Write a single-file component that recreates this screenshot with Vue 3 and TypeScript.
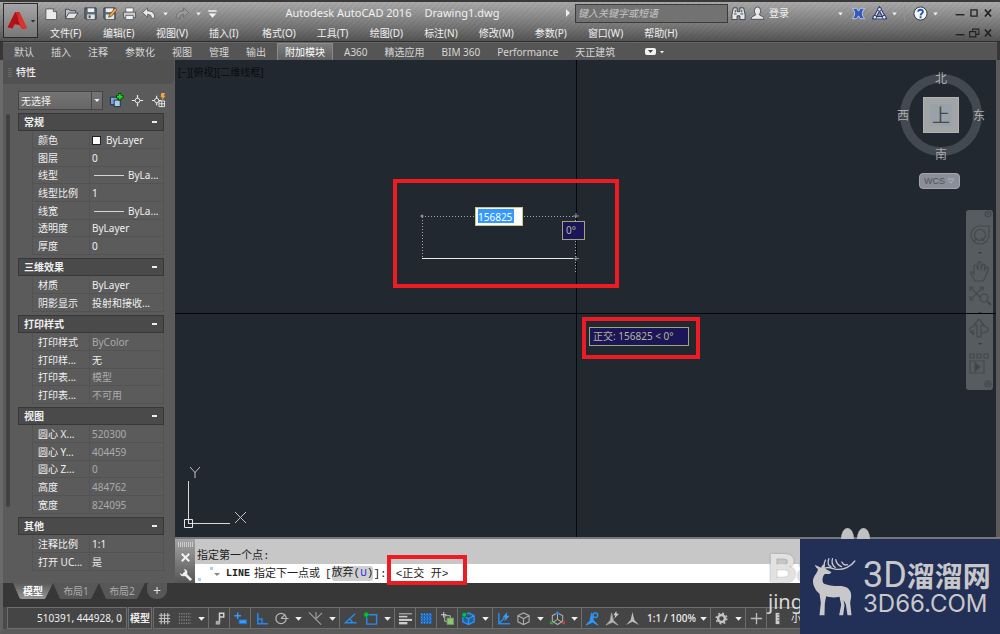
<script setup lang="ts">
import { ref } from 'vue'

interface Row { label: string; value: string; kind?: 'swatch' | 'line'; muted?: boolean }
interface Group { title: string; rows: Row[] }

const icons: Record<string, string> = {
  new: '<path d="M2 3h8l3.500 3v8.500h-11.500z" fill="#ececec" stroke="#555"/><path d="M10 3v3h3.500" fill="#bbb" stroke="#555"/>',
  open: '<path d="M1.500 13.500v-10h4l1 1.500h6v2" fill="#b9c2cc" stroke="#444"/><path d="M1.500 13.500l3.500-6h10l-4 6z" fill="#dfe5ea" stroke="#444"/>',
  save: '<path d="M2 2h12v12h-11l-1-1z" fill="#5c6a78" stroke="#333d48"/><path d="M5 2.500h7v4h-7z" fill="#eee"/><path d="M4.500 9h8v5h-8z" fill="#dfe3e6"/><path d="M6 10h2v3h-2z" fill="#444"/>',
  saveas: '<path d="M2 2h12v12h-11l-1-1z" fill="#5c6a78" stroke="#333d48"/><path d="M4 2.500h8v4h-8z" fill="#eee"/><path d="M4 9h9v5h-9z" fill="#dfe3e6"/><path d="M7 12l1-3 6-7 2 2-6 7z" fill="#f0a63c" stroke="#6b4a20" stroke-width=".8"/>',
  print: '<path d="M4 2h8v5h-8z" fill="#fff" stroke="#666"/><path d="M1.500 6.500h13v6h-13z" fill="#c9cdd2" stroke="#555"/><path d="M4 10h8v4.500h-8z" fill="#e9f1fa" stroke="#666"/>',
  undo: '<path d="M1.500 7l5.500-5v3.200c5 0 7.500 2.300 7.500 6.300v1.500h-3.500c.2-3-1-4-4-4v3z" fill="#e8e8e8" stroke="#555" stroke-width=".9"/>',
  redo: '<path d="M14.500 7l-5.500-5v3.200c-5 0-7.500 2.300-7.500 6.300v1.500h3.500c-.2-3 1-4 4-4v3z" fill="#999" stroke="#6b6b6b" stroke-width=".9"/>',
  customize: '<path d="M3.500 4.500h9v1.500h-9zM4 8h8l-4 4.500z" fill="#f3f3f3"/>',
  find: '<path d="M2.500 2h4v4h3v-4h4l1.500 7v5.500h-5.500v-4h-3v4h-5.500v-5.500z" fill="#e5e5e5" stroke="#39424c"/><path d="M3 8.500h3m4 0h3M4.500 4v3m7-3v3" stroke="#39424c"/>',
  user: '<path d="M4.700 5a3.300 4 0 0 1 6.600 0c0 2-.7 3-1.400 4.200.5 1.500 5 1.200 5 5h-13.800c0-3.800 4.500-3.500 5-5-.7-1.200-1.400-2.200-1.400-4.200z" fill="#e9e9e9" stroke="#39424c" stroke-width=".9"/>',
  exchange: '<path d="M1.500 2.500h4.500l2 3 2-3h4.500q-5 5.500 0 11h-4.500l-2-3-2 3h-4.500q5-5.500 0-11z" fill="#3458b4" stroke="#c4d2ff" stroke-width=".9"/>',
  a360: '<path d="M8 3l5.500 9.500h-11z" fill="none" stroke="#23356b" stroke-width="3.500"/><path d="M8 3l5.500 9.500h-11z" fill="none" stroke="#d9e0f4" stroke-width="1.500"/><circle cx="8" cy="3.500" r="2" fill="#d9e0f4" stroke="#23356b"/><circle cx="3" cy="12" r="2" fill="#d9e0f4" stroke="#23356b"/><circle cx="13" cy="12" r="2" fill="#d9e0f4" stroke="#23356b"/>',
  help: '<circle cx="8" cy="8" r="7" fill="#f4f4f4" stroke="#27303c"/><path d="M5.500 6.200c.2-3 5-2.700 5 0 0 1.700-2.400 1.800-2.400 3.800m0 1v2" fill="none" stroke="#1f58b8" stroke-width="2"/>',
  min: '<path d="M3 10h10" stroke="#222" stroke-width="1.600"/>',
  max: '<path d="M4.500 4.500h7v7h-7z" fill="none" stroke="#222" stroke-width="1.500"/>',
  restore: '<path d="M6.500 6V3.500h7v6h-3M3 6.500h7v6h-7z" fill="none" stroke="#222" stroke-width="1.300"/>',
  close: '<path d="M4.500 4l7 8m0-8l-7 8" stroke="#222" stroke-width="2"/>',
  pick: '<path d="M1.500 4.500h8v8h-8z" fill="#7aa6dc" stroke="#1d2a3a"/><path d="M5.500 7.500h6.500v7h-6.500z" fill="#a9cbf0" stroke="#1d2a3a"/><path d="M11.500 0v8m-4-4h8" stroke="#063c06" stroke-width="3.200"/><path d="M11.500 1v6m-3-3h6" stroke="#18e018" stroke-width="2"/>',
  target: '<path d="M8 2v12M2 8h12" stroke="#e8e8e8" stroke-width="1.300"/><circle cx="8" cy="8" r="2.500" fill="#5b5b5b" stroke="#e8e8e8"/>',
  quick: '<path d="M6 3v10M1 8h10" stroke="#e8e8e8" stroke-width="1.300"/><circle cx="6" cy="8" r="2.300" fill="#5b5b5b" stroke="#e8e8e8"/><path d="M11 0h4l-1.500 3h2l-4 5 .8-3.600h-2z" fill="#f7a93a"/><path d="M8.500 8.500h6v6h-6zM8.500 11.500h6m-3-3v6" fill="#555" stroke="#eee"/>',
  grid: '<path d="M4.500 2v12M8 2v12m3.500-12v12M2 4.500h12M2 8h12M2 11.500h12" stroke="#c4c4c4" stroke-width="1.200"/>',
  snap: '<path d="M2 3h13M2 6.300h13M2 9.600h13M2 13h13" stroke="#aaa" stroke-dasharray="1.200 1.300"/>',
  infer: '<path d="M8 13V2.500h4.500v4H8" fill="none" stroke="#d2d2d2" stroke-width="1.600"/><path d="M4 10.500h4.500v4h-4.500z" fill="#aaa"/>',
  dyn: '<path d="M5 1.500v7M1.500 5h7" stroke="#369cff" stroke-width="1.500"/><path d="M6.500 9.500h8v4h-8z" fill="#389cff" stroke="#1d75d0"/>',
  ortho: '<path d="M4 2v11.500h11M4 8.500h4.500v5" fill="none" stroke="#2387ed" stroke-width="1.600"/>',
  polar: '<circle cx="7.500" cy="8" r="5.500" fill="none" stroke="#b6b6b6" stroke-width="1.300"/><path d="M7.500 8L12 3.500M7.500 8h8" stroke="#b6b6b6" stroke-width="1.200"/>',
  iso: '<path d="M1 1.500l13 13M8.500 1v7M15 2l-6 6" stroke="#a0a0a0" stroke-width="1.200"/>',
  track: '<path d="M13 3L2.500 12.500h12M7 8l3 4" fill="none" stroke="#278bea" stroke-width="1.500"/>',
  osnap: '<path d="M4 4h10.500v10h-10.500z" fill="none" stroke="#278bea" stroke-width="1.500"/><circle cx="3.500" cy="4" r="2.600" fill="#12be3a" stroke="#083"/>',
  weight: '<path d="M1 3h14" stroke="#ccc"/><path d="M1 6h9" stroke="#ccc" stroke-width="1.700"/><path d="M1 9.500h14" stroke="#ccc" stroke-width="2.200"/><path d="M1 13h9" stroke="#ccc" stroke-width="2.500"/>',
  trans: '<path d="M2 2h12v12h-12z" fill="#1d5597"/><path d="M2 3.500h12M2 6.500h12M2 9.500h12M2 12.500h12" stroke="#48a4ff" stroke-width="1.500" stroke-dasharray="1.500 1.500"/><path d="M3 5h11M3 8h11M3 11h11" stroke="#318de7" stroke-dasharray="1.500 1.500"/>',
  cycle: '<path d="M4 1v6M1 4h6" stroke="#ddd"/><path d="M5 5h6v6h-6z" fill="none" stroke="#bbb"/><path d="M7.500 7.500h7v7h-7z" fill="#91c377" stroke="#6c9858"/>',
  snap3d: '<path d="M8 2l6 3v6.500l-6 3-6-3v-6.500zM2 5l6 3 6-3M8 8v6.500" fill="#235f9a" stroke="#2d96fa" stroke-width="1.400"/><circle cx="3.500" cy="4" r="2.600" fill="#12be3a" stroke="#064"/>',
  ducs: '<path d="M3 2v11.500h12M3.500 13L9 7.500" fill="none" stroke="#278bea" stroke-width="1.600"/><path d="M12 1l-5 6h3l-1 4 5.500-6h-3z" fill="#39a0ff"/>',
  cube: '<path d="M8 2l6 3v6.500l-6 3-6-3v-6.500zM2 5l6 3 6-3M8 8v6.500" fill="none" stroke="#aaa" stroke-width="1.200"/>',
  gizmo: '<path d="M8 2l5.500 3v6l-5.500 3.500-5.500-3.500v-6z" fill="none" stroke="#aaa" stroke-width="1.200"/><path d="M8 3v6l-5 3m5-3l5 3" fill="none" stroke="#bbb"/><path d="M5.500 3.500l2.500-3.500 2.500 3.500z" fill="#3287ec"/><path d="M0 10.500l4 3.500h-4z" fill="#2aaf36"/><path d="M12 14l4-3.500v3.500z" fill="#e13b2a"/>',
  ann1: '<path d="M7 2l2 8 5 5-6-3-7 3 4.500-5z" fill="#2d97fb" stroke="#2d97fb"/><circle cx="11" cy="4.500" r="2.500" fill="#444" stroke="#2d97fb" stroke-width="1.500"/>',
  ann2: '<path d="M7 2l2 8 5 5-6-3-7 3 4.500-5z" fill="#bbb" stroke="#999"/><path d="M12 0l-3 4.500h2l-1 3.500 5-5h-2.500z" fill="#ccc"/>',
  ann3: '<path d="M8 1l2 8.500 5 5.500-7-3.500-7 3.500 5-5.500z" fill="#bbb"/>',
  gear: '<circle cx="8" cy="8" r="3.700" fill="none" stroke="#c5c5c5" stroke-width="2.600"/><circle cx="8" cy="8" r="5.700" fill="none" stroke="#c5c5c5" stroke-width="1.500" stroke-dasharray="2 2.500"/>',
  plus: '<path d="M8 2v12M2 8h12" stroke="#bdbdbd" stroke-width="1.400"/>',
  ruler: '<path d="M6 2h4v12h-4z" fill="#ccc"/><path d="M8 4h2M8 7h2M8 10h2" stroke="#666"/>',
  arrow: '<path d="M4.500 6.500h7l-3.500 4z" fill="#f0f0f0"/>',
  tiny: '<path d="M5.500 7h5l-2.500 3z" fill="#f0f0f0"/>'
}

const fileTools = ['new', 'open', 'save', 'saveas', 'print', 'undo']
const menus = ['文件(F)', '编辑(E)', '视图(V)', '插入(I)', '格式(O)', '工具(T)', '绘图(D)', '标注(N)', '修改(M)', '参数(P)', '窗口(W)', '帮助(H)']
const ribbonTabs = ['默认', '插入', '注释', '参数化', '视图', '管理', '输出', '附加模块', 'A360', '精选应用', 'BIM 360', 'Performance', '天正建筑']
const activeTab = ref('附加模块')
const sheets = ['模型', '布局1', '布局2']
const activeSheet = ref('模型')
const length = ref('156825')

const groups: Group[] = [
  { title: '常规', rows: [
    { label: '颜色', value: 'ByLayer', kind: 'swatch' },
    { label: '图层', value: '0' },
    { label: '线型', value: 'ByLa...', kind: 'line' },
    { label: '线型比例', value: '1' },
    { label: '线宽', value: 'ByLa...', kind: 'line' },
    { label: '透明度', value: 'ByLayer' },
    { label: '厚度', value: '0' }
  ] },
  { title: '三维效果', rows: [
    { label: '材质', value: 'ByLayer' },
    { label: '阴影显示', value: '投射和接收...' }
  ] },
  { title: '打印样式', rows: [
    { label: '打印样式', value: 'ByColor', muted: true },
    { label: '打印样...', value: '无' },
    { label: '打印表...', value: '模型', muted: true },
    { label: '打印表...', value: '不可用', muted: true }
  ] },
  { title: '视图', rows: [
    { label: '圆心 X...', value: '520300', muted: true },
    { label: '圆心 Y...', value: '404459', muted: true },
    { label: '圆心 Z...', value: '0', muted: true },
    { label: '高度', value: '484762', muted: true },
    { label: '宽度', value: '824095', muted: true }
  ] },
  { title: '其他', rows: [
    { label: '注释比例', value: '1:1' },
    { label: '打开 UC...', value: '是' }
  ] }
]

const statusGroups: string[][] = [
  ['grid', 'snap', 'arrow'],
  ['infer'],
  ['dyn'],
  ['ortho', 'polar', 'arrow', 'iso', 'arrow'],
  ['track', 'osnap', 'arrow'],
  ['weight'],
  ['trans'],
  ['cycle'],
  ['snap3d', 'arrow'],
  ['ducs', 'cube', 'arrow', 'gizmo', 'arrow']
]
</script>

<template>
  <div class="app">
    <header class="header">
      <button class="app-button" aria-label="A">
        <svg class="logo" viewBox="0 0 32 32">
          <path d="M12 3h6l11 23-7 2-4-6-6-1-4 6-7-2z" fill="#d42a27" />
          <path d="M12 3l5 10-8 9-1 5-7-2z" fill="#b01218" />
          <path d="M15 12l7 10-11-2z" fill="#a01318" />
          <path d="M18 3l11 23-7 2-6-13z" fill="#d9332c" />
        </svg>
        <svg class="icon caret" viewBox="0 0 16 16"><path d="M2 5h12l-6 7z" fill="#26303c" /></svg>
      </button>
      <div class="bars">
        <div class="title-bar">
          <div class="quick">
            <button v-for="name in fileTools" :key="name" class="tool" :aria-label="name"><svg class="icon" viewBox="0 0 16 16" v-html="icons[name]" /></button>
            <button class="drop" aria-label="undo list"><svg class="icon" viewBox="0 0 16 16" v-html="icons.tiny" /></button>
            <button class="tool" aria-label="redo"><svg class="icon" viewBox="0 0 16 16" v-html="icons.redo" /></button>
            <button class="drop" aria-label="redo list"><svg class="icon" viewBox="0 0 16 16" v-html="icons.tiny" /></button>
            <button class="drop" aria-label="customize"><svg class="icon" viewBox="0 0 16 16" v-html="icons.customize" /></button>
          </div>
          <h1 class="title"><span>Autodesk AutoCAD 2016</span><span>Drawing1.dwg</span></h1>
          <svg class="play" viewBox="0 0 6 8"><path d="M1 0l4 4-4 4z" fill="#eee" /></svg>
          <input class="search" type="search" placeholder="键入关键字或短语" aria-label="键入关键字或短语" />
          <div class="account">
            <button class="tool" aria-label="find"><svg class="icon" viewBox="0 0 16 16" v-html="icons.find" /></button>
            <button class="login"><svg class="icon" viewBox="0 0 16 16" v-html="icons.user" />登录</button>
            <button class="drop push" aria-label="account"><svg class="icon" viewBox="0 0 16 16" v-html="icons.tiny" /></button>
            <button class="tool wide" aria-label="exchange"><svg class="icon" viewBox="0 0 16 16" v-html="icons.exchange" /></button>
            <button class="tool" aria-label="a360"><svg class="icon" viewBox="0 0 16 16" v-html="icons.a360" /></button>
            <button class="drop narrow" aria-label="a360 menu"><svg class="icon" viewBox="0 0 16 16" v-html="icons.tiny" /></button>
            <span class="divider" />
            <button class="tool" aria-label="help"><svg class="icon" viewBox="0 0 16 16" v-html="icons.help" /></button>
            <button class="drop narrow" aria-label="help menu"><svg class="icon" viewBox="0 0 16 16" v-html="icons.tiny" /></button>
          </div>
          <div class="window-buttons">
            <button v-for="name in ['min', 'max', 'close']" :key="name" :aria-label="name"><svg class="icon small" viewBox="0 0 16 16" v-html="icons[name]" /></button>
          </div>
        </div>
        <div class="menu-bar">
          <nav class="menus">
            <button v-for="menu in menus" :key="menu">{{ menu }}</button>
          </nav>
          <div class="window-buttons">
            <button v-for="name in ['min', 'restore', 'close']" :key="name" :aria-label="name"><svg class="icon small" viewBox="0 0 16 16" v-html="icons[name]" /></button>
          </div>
        </div>
      </div>
    </header>

    <nav class="ribbon">
      <button v-for="tab in ribbonTabs" :key="tab" :class="{ active: tab === activeTab }" @click="activeTab = tab">{{ tab }}</button>
      <button class="ribbon-toggle" aria-label="ribbon">
        <svg viewBox="0 0 22 10"><rect x="1" y="1" width="11" height="7" rx="2" fill="#f2f2f2" /><path d="M4 3h5l-2.500 3z" fill="#444" /><path d="M16 4h4l-2 2.500z" fill="#eee" /></svg>
      </button>
    </nav>

    <div class="work">
      <aside class="palette">
        <h2 class="palette-title"><span class="grip" />特性</h2>
        <div class="palette-body">
          <div class="scroll"><span /></div>
          <div class="props">
            <div class="chooser">
              <div class="combo">
                <select aria-label="无选择"><option>无选择</option></select>
                <svg class="icon combo-arrow" viewBox="0 0 16 16" v-html="icons.arrow" />
              </div>
              <button v-for="name in ['pick', 'target', 'quick']" :key="name" :aria-label="name"><svg class="icon" viewBox="0 0 16 16" v-html="icons[name]" /></button>
            </div>
            <section v-for="group in groups" :key="group.title" class="group">
              <button class="group-head">{{ group.title }}<span class="minus" /></button>
              <table>
                <tbody>
                  <tr v-for="(row, i) in group.rows" :key="i">
                    <th scope="row">{{ row.label }}</th>
                    <td :class="{ muted: row.muted }"><span v-if="row.kind" :class="row.kind" />{{ row.value }}</td>
                  </tr>
                </tbody>
              </table>
            </section>
          </div>
        </div>
      </aside>

      <main class="main">
        <div class="canvas">
          <span class="view-label">[−][俯视][二维线框]</span>
          <div class="compass">
            <span class="n">北</span><span class="w">西</span><span class="e">东</span><span class="s">南</span>
            <button class="cube"><span>上</span></button>
          </div>
          <button class="wcs">WCS<svg viewBox="0 0 10 8"><path d="M1 1h8l-4 6z" fill="#8f929b" stroke="#b0b2b9" /></svg></button>
          <div class="nav-bar">
            <svg viewBox="0 0 27 180" fill="none" stroke="#43484d" stroke-width="1.200">
              <circle cx="22" cy="4" r="3" /><path d="M20.500 2.500l3 3m0-3l-3 3" />
              <path d="M14 16h9v10a9 9 0 1 1-9-10z" /><circle cx="14" cy="25" r="5.500" /><path d="M8 31l3-3m7 3l-3-3" />
              <path d="M9 71l-4-7c-1-3 1-3 3 0v-7c0-3 2-3 3 0l1 3v-6c0-3 3-3 3 0v6l1-4c1-3 3-2 3 0l-1 5 2-3c2-2 3 0 2 2l-3 8-2 3z" />
              <path d="M4 77l13 13M17 77L4 90M4 81v-4h4M13 77h4v4M4 86v4h4" /><circle cx="18" cy="88" r="4" fill="#575c61" /><path d="M21 91l4 4" stroke-width="2" />
              <path d="M11 127v-12h-3l5-6 5 6h-3v12z" /><path d="M9 116c-7 1-7 6 0 7m8-7c7 1 7 6-1 7M8 120l-3 2 3 3" />
              <path d="M4 144h4v4h-4zm7 0h4v4h-4zm7 0h4v4h-4zM4 151h14v12h-14z" /><path d="M9 153l5 4-5 4z" fill="#3e4348" />
              <circle cx="22" cy="174" r="3" /><circle cx="22" cy="174" r="1" />
              <path d="M12 42h4l-2 2zm0 60h4l-2 2zm0 31h4l-2 2z" fill="#343a40" stroke="none" />
            </svg>
          </div>
          <svg class="drawing">
            <path d="M0 253.500H821M401.500 0V477" stroke="#05080b" />
            <path d="M247 156.500H401M247.500 157V198M400.500 157V212" stroke="#a5a8aa" stroke-dasharray="1 2" fill="none" />
            <path d="M247 198.500H401" stroke="#e8e8e8" />
            <circle cx="247" cy="156" r="1.500" fill="#8d9194" />
            <path d="M398 156h6M398 198.500h6M401 196v5M401 153v5" stroke="#8d9194" />
            <path d="M13.500 464V421M13 463.500H55" stroke="#d5d7d9" />
            <path d="M9.500 459.500h8v8h-8z" stroke="#e6e6e6" fill="none" />
            <path d="M15 407l5 5.500 5-5.500M20 412v6M60 452l11 11M71 452L60 463" stroke="#bfc3c6" fill="none" />
          </svg>
          <input v-model="length" class="length" aria-label="length" />
          <span class="tip angle">0°</span>
          <span class="tip polar">正交: 156825 &lt; 0°</span>
          <span class="mark mark-draw" />
          <span class="mark mark-tip" />
        </div>

        <div class="command">
          <div class="command-side">
            <span class="dots" />
            <button aria-label="close"><svg class="icon" viewBox="0 0 16 16"><path d="M4 4l8 8m0-8l-8 8" stroke="#f4f4f4" stroke-width="2" /></svg></button>
            <button aria-label="settings"><svg class="icon" viewBox="0 0 16 16"><path d="M6 6l8 8" stroke="#f0f0f0" stroke-width="3" /><path d="M6.500 2a4 4 0 1 1-4.500 4.500l2.500 1.500 3-3z" fill="#f0f0f0" /></svg></button>
          </div>
          <div class="command-text">
            <p class="history">指定第一个点:</p>
            <div class="prompt">
              <svg class="prompt-icon" viewBox="0 0 28 16"><path d="M1 12h3v3h-3zM13 1h3v3h-3z" fill="#a9cdf8" /><path d="M17 7h6l-3 3z" fill="#888" /></svg>
              <b>LINE</b><span class="ask">指定下一点或</span><span>[</span><button class="option">放弃(<i>U</i>)</button><span>]:</span><span class="reply">&lt;正交 开&gt;</span>
            </div>
          </div>
          <span class="mark mark-command" />
        </div>
      </main>
    </div>

    <nav class="sheets">
      <button v-for="sheet in sheets" :key="sheet" :class="{ active: sheet === activeSheet }" @click="activeSheet = sheet">{{ sheet }}</button>
      <button class="add" aria-label="add">+</button>
    </nav>

    <footer class="status">
      <span class="coords">510391, 444928, 0</span>
      <button class="model">模型</button>
      <div v-for="(items, g) in statusGroups" :key="g" class="cell">
        <button v-for="(name, i) in items" :key="i" :class="name === 'arrow' ? 'more' : 'item'" :aria-label="name"><svg class="icon" viewBox="0 0 16 16" v-html="icons[name]" /></button>
      </div>
      <div class="cell">
        <button v-for="name in ['ann1', 'ann2', 'ann3']" :key="name" class="item" :aria-label="name"><svg class="icon" viewBox="0 0 16 16" v-html="icons[name]" /></button>
        <button class="scale">1:1 / 100%</button>
        <button class="more" aria-label="scale list"><svg class="icon" viewBox="0 0 16 16" v-html="icons.arrow" /></button>
      </div>
      <div class="cell">
        <button class="item" aria-label="workspace"><svg class="icon" viewBox="0 0 16 16" v-html="icons.gear" /></button>
        <button class="more" aria-label="workspace list"><svg class="icon" viewBox="0 0 16 16" v-html="icons.arrow" /></button>
      </div>
      <div class="cell"><button class="item" aria-label="plus"><svg class="icon" viewBox="0 0 16 16" v-html="icons.plus" /></button></div>
      <div class="cell last">
        <button class="item" aria-label="units"><svg class="icon" viewBox="0 0 16 16" v-html="icons.ruler" /></button>
        <span>小</span>
      </div>
    </footer>

    <div class="stamp">
      <span class="paws"><i /><i /></span>
      <div class="faint"><b>Ba</b><span>jing</span></div>
      <div class="brand">
        <svg class="deer" viewBox="450 110 140 180">
          <path d="M465 134l18 8c2-6 4-8 8-10l5 13 18 11-6 5-14 0c-7 6-9 18-5 27 12 8 30 9 48 9 20 0 30 6 35 20 3 11-1 20-2 31l4 37h-12l-5-33-7-13 3 15-4 31h-12l6-32-5-24c-15 4-30 2-40-1l-4 21-1 36h-15l4-38-4-27c-16-12-23-34-18-47 5-12 14-19 13-28-4-1-7-5-9-11z" fill="#c8c8ca" />
          <path d="M495 143c12-5 20 2 35 4 20 2 42-8 54-25M512 139c-8-4-10-14-6-24M525 141c-9-6-11-16-8-26M544 139c-9-4-16-8-17-21M562 133c-8 3-14-2-17-8M493 135c-1-6 0-11 3-16" fill="none" stroke="#c8c8ca" stroke-width="4" stroke-linecap="round" />
        </svg>
        <div class="brand-text">
          <p class="brand-name"><span>3D</span>溜溜网</p>
          <p class="brand-url">3D66.COM</p>
        </div>
      </div>
    </div>
  </div>
</template>

<style>
body { margin: 0; background: #373737; }
</style>

<style scoped>
* { box-sizing: border-box; }
.app {
  position: relative;
  display: flex;
  flex-direction: column;
  min-height: 100vh;
  overflow: hidden;
  font: 10px/14px "Noto Sans", "Noto Sans CJK SC", sans-serif;
  color: #f0f0f0;
  background: #373737;
  border-top: 2px solid #3a3838;
}
button { font: inherit; color: inherit; background: none; border: 0; padding: 0; margin: 0; white-space: nowrap; }
h1, h2, p { margin: 0; font-weight: 400; }
.icon { display: block; width: 15px; height: 15px; flex: none; }
.small { width: 14px; height: 14px; }

.header {
  display: flex;
  background: repeating-linear-gradient(135deg, transparent 0 2px, rgba(0, 0, 0, .04) 2px 4px), linear-gradient(#aaaaaa, #7d7d7d 55%, #545454);
  border-bottom: 1px solid #2e2e2e;
}
.app-button {
  display: flex;
  align-items: center;
  width: 35px;
  height: 35px;
  margin: 1px 0 3px 3px;
  border: 1px solid #2b2b2b;
  background: linear-gradient(#a5a5a5, #777);
}
.logo { width: 22px; height: 24px; margin-left: 3px; }
.caret { width: 6px; height: 6px; margin-left: 1px; }
.bars { flex: 1; min-width: 0; display: flex; flex-direction: column; }
.title-bar { display: flex; align-items: center; height: 22px; }
.quick { display: flex; align-items: center; width: 182px; padding-left: 4px; }
.tool { width: 20px; display: flex; justify-content: center; }
.wide { width: 22px; }
.drop { width: 14px; display: flex; justify-content: center; }
.narrow { width: 10px; }
.title { flex: 1; display: flex; justify-content: center; gap: 13px; font-size: 11px; line-height: 20px; white-space: nowrap; }
.play { width: 6px; height: 8px; margin-right: 4px; }
.search {
  width: 153px;
  height: 19px;
  border: 1px solid #3c3c3c;
  background: #727272;
  color: #ddd;
  padding: 0 2px;
  font: italic 10px "Noto Sans", "Noto Sans CJK SC", sans-serif;
}
.search::placeholder { color: #c6c6c6; }
.account { display: flex; align-items: center; width: 212px; }
.login { display: flex; align-items: center; gap: 4px; margin-left: 2px; }
.push { margin-left: auto; }
.divider { width: 1px; height: 15px; background: #909090; margin: 0 5px; }
.window-buttons { display: flex; margin-left: auto; padding-right: 5px; width: 56px; justify-content: flex-end; }
.title-bar .window-buttons { margin-left: 12px; width: 48px; }
.menu-bar { display: flex; align-items: center; height: 17px; }
.menus { display: flex; gap: 21px; padding-left: 12px; }
.menus button { min-width: 32px; text-align: left; }

.ribbon {
  display: flex;
  align-items: center;
  gap: 1px;
  height: 18px;
  margin: 0 3px;
  padding-left: 3px;
  background: #555;
  border-top: 1px solid #666;
  color: #d6d6d6;
}
.ribbon button { height: 17px; padding: 0 8px; }
.ribbon .active { background: linear-gradient(#7c7c7c, #606060); border: 1px solid #8a8a8a; border-bottom: 0; padding: 0 7px; margin: 0 2px; color: #fff; }
.ribbon .ribbon-toggle { margin-left: 20px; padding: 0; height: 10px; }
.ribbon-toggle svg { display: block; width: 22px; height: 10px; }

.work { flex: 1; display: flex; min-height: 0; }
.palette { width: 175px; flex: none; background: #5b5b5b; border-left: 3px solid #6a6a6a; display: flex; flex-direction: column; }
.palette-title { display: flex; align-items: center; height: 24px; background: #515151; font-size: 10px; font-weight: 500; border-radius: 0 0 4px 0; margin-right: 1px; }
.grip { width: 4px; height: 9px; margin: 0 4px 0 5px; background: repeating-linear-gradient(#686868 0 1px, transparent 1px 2px); }
.palette-body { display: flex; flex: 1; padding: 7px 11px 0 3px; }
.scroll { width: 4px; margin-right: 8px; padding-top: 23px; }
.scroll span { display: block; width: 4px; height: 393px; border-radius: 2px; background: #414141; }
.props { flex: 1; min-width: 0; }
.chooser { display: flex; align-items: center; gap: 6px; height: 19px; margin-bottom: 3px; }
.combo { position: relative; flex: none; width: 85px; height: 19px; }
.combo select {
  width: 100%;
  height: 100%;
  appearance: none;
  border: 1px solid #444;
  border-radius: 0;
  background: linear-gradient(90deg, transparent 72px, #474747 72px 73px, transparent 73px), linear-gradient(#757575, #666);
  color: #eee;
  font: inherit;
  padding: 0 2px;
}
.combo-arrow { position: absolute; right: 0; top: 3px; width: 12px; height: 12px; pointer-events: none; }
.group { margin-bottom: 3px; }
.group-head {
  display: flex;
  align-items: center;
  justify-content: space-between;
  width: 100%;
  height: 18px;
  padding: 0 6px 0 5px;
  border: 1px solid #383838;
  background: #4a4a4a;
  font-weight: 700;
}
.minus { width: 5px; height: 2px; background: #eee; }
table { width: calc(100% - 14px); margin-left: 14px; border-collapse: separate; border-spacing: 0; table-layout: fixed; }
tr { height: 18px; }
tr:nth-child(3n) { height: 17px; }
th, td { border: solid #535353; border-width: 0 1px 1px 0; padding: 0; font-weight: 400; text-align: left; line-height: 14px; white-space: nowrap; overflow: hidden; }
th { width: 58px; padding-left: 5px; border-left-width: 1px; }
td { padding-left: 2px; }
.muted { color: #aaa; }
.swatch { display: inline-block; width: 9px; height: 9px; margin: 0 5px 0 0; vertical-align: -1px; background: #fff; border: 1px solid #222; }
.line { display: inline-block; width: 30px; height: 1px; margin: 0 4px 0 2px; vertical-align: 3px; background: #d5d5d5; }

.main { flex: 1; min-width: 0; display: flex; flex-direction: column; }
.canvas { position: relative; flex: 1; min-height: 477px; background: #212830; border-right: 4px solid #5c5b58; overflow: hidden; }
.drawing { position: absolute; inset: 0; width: 100%; height: 100%; }
.view-label { position: absolute; left: 3px; top: 5px; color: #090c0f; }
.compass { position: absolute; right: 14px; top: 14px; width: 82px; height: 82px; border: 9px solid #424951; border-radius: 50%; color: #adadad; font: 12px/14px "Noto Sans CJK SC", sans-serif; }
.compass > span { position: absolute; }
.n { left: 26px; top: -12px; }
.s { left: 26px; bottom: -14px; }
.w { left: -12px; top: 25px; }
.e { right: -12px; top: 25px; }
.cube { position: absolute; left: 14px; top: 14px; width: 36px; height: 36px; background: #a3a4a6; border: 1px solid #b1b2b3; display: flex; align-items: center; justify-content: center; }
.cube span { width: 22px; height: 22px; background: #98a2a8; color: #44494d; font-size: 18px; line-height: 20px; }
.wcs { position: absolute; right: 36px; top: 113px; width: 41px; height: 16px; display: flex; align-items: center; justify-content: space-between; padding: 0 4px; border: 1px solid #a3a5ae; border-radius: 4px; background: #8b8e98; color: #50545e; font: 9px/12px "Liberation Sans", sans-serif; }
.wcs svg { width: 8px; height: 6px; }
.nav-bar { position: absolute; right: 3px; top: 150px; width: 27px; height: 180px; border-radius: 3px; background: #575c61; }
.nav-bar svg { display: block; width: 27px; height: 180px; }
.length { position: absolute; left: 300px; top: 147px; width: 48px; height: 19px; border: 1px solid #c9c58c; background: linear-gradient(#3399ff, #3399ff) 2px 1px / 36px 14px no-repeat #fff; color: #fff; padding: 0 2px; font: 10px "Noto Sans", sans-serif; }
.tip { position: absolute; border: 1px solid #a5a27c; background: #1a1657; color: #b9b597; line-height: 16px; padding-left: 3px; white-space: nowrap; }
.angle { left: 387px; top: 161px; width: 23px; height: 19px; }
.polar { left: 414px; top: 267px; width: 100px; height: 19px; }
.mark { position: absolute; border: 4px solid #ec1c24; pointer-events: none; }
.mark-draw { left: 218px; top: 119px; width: 226px; height: 109px; }
.mark-tip { left: 407px; top: 257px; width: 118px; height: 42px; }
.mark-command { left: 212px; top: 16px; width: 80px; height: 30px; }

.command { position: relative; display: flex; height: 46px; border-top: 2px solid #777; color: #222; }
.command-side { width: 20px; display: flex; flex-direction: column; align-items: center; background: linear-gradient(#a5a5a5, #555); }
.dots { width: 15px; height: 5px; margin: 3px 0 2px; background: repeating-linear-gradient(90deg, #ccc 0 1px, transparent 1px 2px); }
.command-side button { height: 17px; }
.command-text { flex: 1; min-width: 0; font: 11px/16px "Liberation Mono", "Noto Sans CJK SC", monospace; white-space: nowrap; }
.history { height: 25px; padding: 9px 2px 0; background: #c7c7c7; }
.prompt { display: flex; align-items: center; height: 19px; background: #fff; }
.prompt-icon { width: 28px; height: 16px; margin: 0 1px 0 2px; }
.prompt b { font-size: 10px; width: 25px; }
.ask { margin: 0 5px 0 3px; }
.option { height: 15px; background: #cfcfcf; border-radius: 3px; line-height: 15px; }
.option i { font-style: normal; color: #3535e8; }
.reply { margin-left: 9px; }

.sheets { display: flex; align-items: flex-start; height: 24px; padding-left: 10px; border-left: 3px solid #626262; color: #aaa; }
.sheets button { height: 16px; width: 46px; background: #575757; border-radius: 0 0 9px 9px; clip-path: polygon(0 0, 100% 0, calc(100% - 8px) 100%, 7px 100%); }
.sheets .active { width: 40px; background: linear-gradient(#5b5b5b, #979797); color: #fff; font-weight: 700; }
.sheets .add { width: 20px; margin-left: 2px; color: #ddd; font-size: 14px; line-height: 14px; clip-path: none; border-radius: 2px 0 9px 9px; }

.status { display: flex; height: 27px; padding: 0 0 0 4px; background: #4a4a4a; border-left: 3px solid #626262; border-bottom: 5px solid #5b5b5b; overflow: hidden; white-space: nowrap; }
.status > * { flex: none; height: 22px; border: 1px solid #6d6d6d; background: #454545; }
.coords { width: 120px; padding-right: 4px; text-align: right; line-height: 20px; margin-right: 1px; }
.model { width: 24px; font-weight: 700; margin-right: 1px; overflow: hidden; }
.cell { display: flex; align-items: center; margin-right: -1px; }
.item { width: 20px; display: flex; justify-content: center; }
.more { width: 14px; display: flex; justify-content: center; }
.scale { width: 54px; text-align: right; font-weight: 500; }
.last { width: 60px; }
.last span { margin-left: 4px; }

.stamp { position: absolute; right: 0; bottom: 0; width: 232px; height: 106px; pointer-events: none; }
.paws { position: absolute; left: 73px; top: 0; display: flex; gap: 3px; }
.paws i { width: 13px; height: 22px; border-radius: 50%; background: #bfc1c2; }
.faint { position: absolute; left: 0; top: 18px; color: rgba(238, 238, 238, .9); }
.faint b { display: block; font: 700 40px/44px "Liberation Sans", sans-serif; text-shadow: 0 0 2px #888; }
.faint span { display: block; font: 20px/24px "Noto Sans", sans-serif; }
.brand { position: absolute; right: 0; bottom: 0; width: 200px; height: 95px; background: #222f56; color: #c8c8ca; display: flex; align-items: center; padding-left: 10px; }
.deer { width: 47px; height: 60px; flex: none; }
.brand-text { margin-left: 6px; }
.brand-name { display: flex; align-items: center; font: 700 28px/34px "Noto Sans CJK SC", sans-serif; white-space: nowrap; }
.brand-name span { font: 400 36px/34px Roboto, sans-serif; }
.brand-url { font: 24px/24px Inter, sans-serif; }
</style>
